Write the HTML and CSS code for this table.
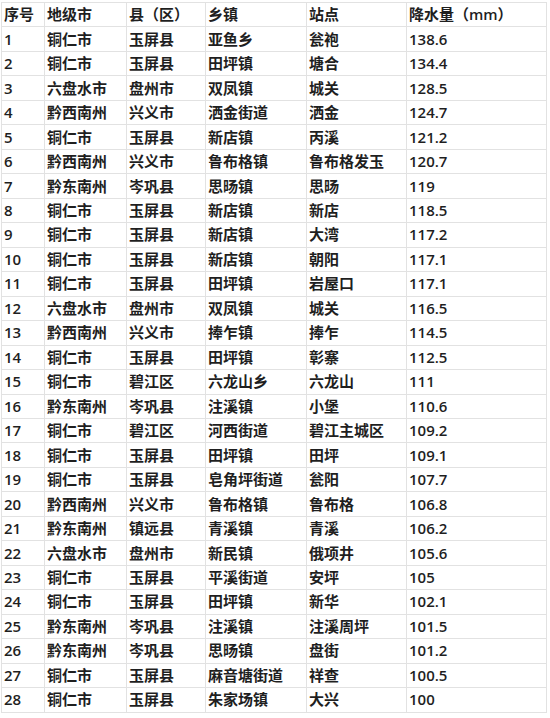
FILE: index.html
```html
<!DOCTYPE html>
<html lang="zh-CN">
<head>
<meta charset="utf-8">
<title>降水量</title>
<link rel="stylesheet" href="styles.css">
</head>
<body>
<table class="rain">
<colgroup>
<col class="c1"><col class="c2"><col class="c3"><col class="c4"><col class="c5"><col class="c6">
</colgroup>
<thead>
<tr><th>序号</th><th>地级市</th><th>县（区）</th><th>乡镇</th><th>站点</th><th>降水量（mm）</th></tr>
</thead>
<tbody>
<tr><td>1</td><td>铜仁市</td><td>玉屏县</td><td>亚鱼乡</td><td>瓮袍</td><td>138.6</td></tr>
<tr><td>2</td><td>铜仁市</td><td>玉屏县</td><td>田坪镇</td><td>塘合</td><td>134.4</td></tr>
<tr><td>3</td><td>六盘水市</td><td>盘州市</td><td>双凤镇</td><td>城关</td><td>128.5</td></tr>
<tr><td>4</td><td>黔西南州</td><td>兴义市</td><td>洒金街道</td><td>洒金</td><td>124.7</td></tr>
<tr><td>5</td><td>铜仁市</td><td>玉屏县</td><td>新店镇</td><td>丙溪</td><td>121.2</td></tr>
<tr><td>6</td><td>黔西南州</td><td>兴义市</td><td>鲁布格镇</td><td>鲁布格发玉</td><td>120.7</td></tr>
<tr><td>7</td><td>黔东南州</td><td>岑巩县</td><td>思旸镇</td><td>思旸</td><td>119</td></tr>
<tr><td>8</td><td>铜仁市</td><td>玉屏县</td><td>新店镇</td><td>新店</td><td>118.5</td></tr>
<tr><td>9</td><td>铜仁市</td><td>玉屏县</td><td>新店镇</td><td>大湾</td><td>117.2</td></tr>
<tr><td>10</td><td>铜仁市</td><td>玉屏县</td><td>新店镇</td><td>朝阳</td><td>117.1</td></tr>
<tr><td>11</td><td>铜仁市</td><td>玉屏县</td><td>田坪镇</td><td>岩屋口</td><td>117.1</td></tr>
<tr><td>12</td><td>六盘水市</td><td>盘州市</td><td>双凤镇</td><td>城关</td><td>116.5</td></tr>
<tr><td>13</td><td>黔西南州</td><td>兴义市</td><td>捧乍镇</td><td>捧乍</td><td>114.5</td></tr>
<tr><td>14</td><td>铜仁市</td><td>玉屏县</td><td>田坪镇</td><td>彰寨</td><td>112.5</td></tr>
<tr><td>15</td><td>铜仁市</td><td>碧江区</td><td>六龙山乡</td><td>六龙山</td><td>111</td></tr>
<tr><td>16</td><td>黔东南州</td><td>岑巩县</td><td>注溪镇</td><td>小堡</td><td>110.6</td></tr>
<tr><td>17</td><td>铜仁市</td><td>碧江区</td><td>河西街道</td><td>碧江主城区</td><td>109.2</td></tr>
<tr><td>18</td><td>铜仁市</td><td>玉屏县</td><td>田坪镇</td><td>田坪</td><td>109.1</td></tr>
<tr><td>19</td><td>铜仁市</td><td>玉屏县</td><td>皂角坪街道</td><td>瓮阳</td><td>107.7</td></tr>
<tr><td>20</td><td>黔西南州</td><td>兴义市</td><td>鲁布格镇</td><td>鲁布格</td><td>106.8</td></tr>
<tr><td>21</td><td>黔东南州</td><td>镇远县</td><td>青溪镇</td><td>青溪</td><td>106.2</td></tr>
<tr><td>22</td><td>六盘水市</td><td>盘州市</td><td>新民镇</td><td>俄项井</td><td>105.6</td></tr>
<tr><td>23</td><td>铜仁市</td><td>玉屏县</td><td>平溪街道</td><td>安坪</td><td>105</td></tr>
<tr><td>24</td><td>铜仁市</td><td>玉屏县</td><td>田坪镇</td><td>新华</td><td>102.1</td></tr>
<tr><td>25</td><td>黔东南州</td><td>岑巩县</td><td>注溪镇</td><td>注溪周坪</td><td>101.5</td></tr>
<tr><td>26</td><td>黔东南州</td><td>岑巩县</td><td>思旸镇</td><td>盘街</td><td>101.2</td></tr>
<tr><td>27</td><td>铜仁市</td><td>玉屏县</td><td>麻音塘街道</td><td>祥查</td><td>100.5</td></tr>
<tr><td>28</td><td>铜仁市</td><td>玉屏县</td><td>朱家场镇</td><td>大兴</td><td>100</td></tr>
</tbody>
</table>
</body>
</html>
```
FILE: styles.css
```css
html, body {
  margin: 0;
  padding: 0;
  background: #ffffff;
}

body {
  font-family: "Open Sans", "Noto Sans CJK SC", sans-serif;
  font-size: 15px;
  font-weight: 600;
  color: #1f1f1f;
}

.rain {
  margin: 2px 0 0 1px;
  border-collapse: collapse;
  table-layout: fixed;
  width: 545px;
}

.c1 { width: 43px; }
.c2 { width: 82px; }
.c3 { width: 79px; }
.c4 { width: 101px; }
.c5 { width: 100px; }
.c6 { width: 140px; }

.rain tr {
  height: 24.47px;
}

.rain th,
.rain td {
  border: 1px solid #e2e2e2;
  padding: 0 0 0 2px;
  text-align: left;
  vertical-align: middle;
  font-weight: 600;
  white-space: nowrap;
  overflow: hidden;
  line-height: 1;
}
```
